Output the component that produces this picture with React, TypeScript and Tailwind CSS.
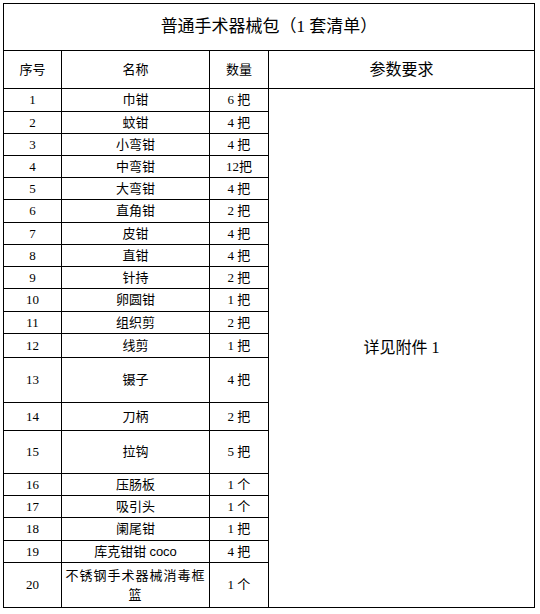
import React from "react";

const rows: [string, React.ReactNode, string][] = [
  ["1", "巾钳", "6 把"],
  ["2", "蚊钳", "4 把"],
  ["3", "小弯钳", "4 把"],
  ["4", "中弯钳", "12把"],
  ["5", "大弯钳", "4 把"],
  ["6", "直角钳", "2 把"],
  ["7", "皮钳", "4 把"],
  ["8", "直钳", "4 把"],
  ["9", "针持", "2 把"],
  ["10", "卵圆钳", "1 把"],
  ["11", "组织剪", "2 把"],
  ["12", "线剪", "1 把"],
  ["13", "镊子", "4 把"],
  ["14", "刀柄", "2 把"],
  ["15", "拉钩", "5 把"],
  ["16", "压肠板", "1 个"],
  ["17", "吸引头", "1 个"],
  ["18", "阑尾钳", "1 把"],
  [
    "19",
    <span>
      库克钳钳{" "}
      <span className="font-['Liberation_Sans',sans-serif]">coco</span>
    </span>,
    "4 把",
  ],
  [
    "20",
    <span className="flex flex-col items-center leading-[19px] tracking-[1px]">
      <span>不锈钢手术器械消毒框</span>
      <span>篮</span>
    </span>,
    "1 个",
  ],
];

export default function App() {
  return (
    <div className="w-[540px] h-[614px] bg-white pt-[3px] pl-[3px] text-black font-['Liberation_Serif','Noto_Sans_CJK_SC',serif]">
      <div className="grid w-[532px] grid-cols-[57px_147px_58px_265px] grid-rows-[46px_37px_22px_21px_21px_21px_21px_22px_21px_21px_21px_22px_21px_23px_44px_27px_42px_21px_21px_22px_21px_44px] gap-px bg-black p-px">
        <div className="col-span-4 flex items-center justify-center bg-white text-[17px]">
          <span>普通手术器械包（1 套清单）</span>
        </div>
        <div className="flex items-center justify-center bg-white text-[13px]">序号</div>
        <div className="flex items-center justify-center bg-white text-[13px]">名称</div>
        <div className="flex items-center justify-center bg-white text-[13px]">数量</div>
        <div className="flex items-center justify-center bg-white text-[16px]">参数要求</div>
        <div className="[grid-column:4] [grid-row:3/23] flex items-center justify-center bg-white text-[16px]">
          详见附件 1
        </div>
        {rows.map(([n, name, q], i) => (
          <React.Fragment key={i}>
            <div
              className="[grid-column:1] flex items-center justify-center bg-white text-[13px]"
              style={{ gridRow: i + 3 }}
            >
              {n}
            </div>
            <div
              className="[grid-column:2] flex items-center justify-center bg-white text-[13px]"
              style={{ gridRow: i + 3 }}
            >
              {name}
            </div>
            <div
              className="[grid-column:3] flex items-center justify-center bg-white text-[13px]"
              style={{ gridRow: i + 3 }}
            >
              {q}
            </div>
          </React.Fragment>
        ))}
      </div>
    </div>
  );
}
